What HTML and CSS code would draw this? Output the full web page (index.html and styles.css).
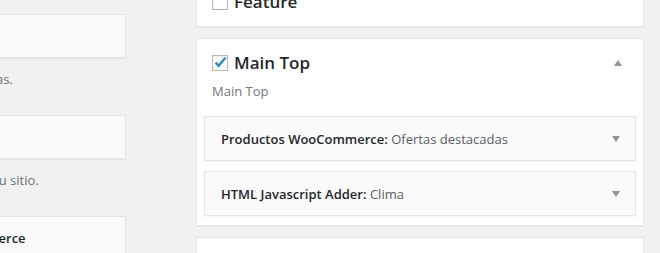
FILE: index.html
```html
<!DOCTYPE html>
<html lang="es">
<head>
    <meta charset="UTF-8">
    <meta name="viewport" content="width=device-width, initial-scale=1.0">
    <title>Widgets</title>
    <link rel="stylesheet" href="styles.css">
</head>
<body>
    <div class="page">
        <div class="available">
            <div class="widget">
                <div class="widget-top"><h3>Categorías</h3></div>
                <p class="widget-desc">Una lista o desplegable de categorías.</p>
            </div>
            <div class="widget">
                <div class="widget-top"><h3>Calendario</h3></div>
                <p class="widget-desc">Un calendario con las entradas de tu sitio.</p>
            </div>
            <div class="widget">
                <div class="widget-top"><h3>Productos recientes WooCommerce</h3></div>
            </div>
        </div>

        <div class="sidebars">
            <div class="sidebar">
                <div class="sidebar-name">
                    <span class="check"></span>
                    <h2>Feature</h2>
                </div>
            </div>

            <div class="sidebar">
                <div class="sidebar-name">
                    <span class="check checked">
                        <svg width="16" height="16" viewBox="0 0 16 16"><path d="M3.6 7.6 L6.6 10.8 L13.4 2.8" fill="none" stroke="#1e8cbe" stroke-width="2.4"/></svg>
                    </span>
                    <h2>Main Top</h2>
                    <span class="arrow-up"></span>
                </div>
                <p class="sidebar-description">Main Top</p>
                <div class="widget-list">
                    <div class="sidebar-widget">
                        <h3>Productos WooCommerce:<span class="in-title"> Ofertas destacadas</span></h3>
                        <span class="arrow-down"></span>
                    </div>
                    <div class="sidebar-widget">
                        <h3>HTML Javascript Adder:<span class="in-title"> Clima</span></h3>
                        <span class="arrow-down"></span>
                    </div>
                </div>
            </div>

            <div class="sidebar empty"></div>
        </div>
    </div>
</body>
</html>
```

FILE: styles.css
```css
body {
    margin: 0;
    overflow: hidden;
    background-color: #f1f1f1;
    font-family: "Open Sans", "DejaVu Sans", sans-serif;
    color: #23282d;
}
.page {
    display: flex;
    gap: 70px;
    margin-left: -215px;
}
h2, h3, p {
    margin: 0;
}
h3 {
    font-size: 13px;
    font-weight: 600;
    line-height: 18px;
    color: #23282d;
    white-space: nowrap;
}

/* widgets disponibles */
.available {
    width: 341px;
    flex-shrink: 0;
    padding-top: 14px;
}
.widget-top {
    display: flex;
    align-items: center;
    height: 42px;
    padding: 0 15px;
    border: 1px solid #e5e5e5;
    background-color: #fafafa;
    box-shadow: 0 1px 1px rgba(0, 0, 0, 0.04);
}
.widget-desc {
    margin: 12px 0 27px;
    font-size: 13px;
    line-height: 18px;
    color: #6c7278;
    white-space: nowrap;
}

/* areas de widgets */
.sidebars {
    width: 448px;
    flex-shrink: 0;
    margin-top: -23px;
}
.sidebar {
    margin-bottom: 11px;
    border: 1px solid #e5e5e5;
    background-color: #fff;
    box-shadow: 0 1px 1px rgba(0, 0, 0, 0.04);
}
.sidebar.empty {
    height: 60px;
}
.sidebar-name {
    display: flex;
    align-items: center;
    height: 48px;
    padding: 0 21px 0 15px;
}
.sidebar-name h2 {
    flex: 1;
    margin-left: 6px;
    font-size: 17px;
    font-weight: 600;
    line-height: 22px;
    color: #23282d;
}
.check {
    width: 14px;
    height: 14px;
    border: 1px solid #b4b9be;
    background-color: #fff;
    box-shadow: inset 0 1px 2px rgba(0, 0, 0, 0.1);
    position: relative;
}
.check svg {
    position: absolute;
    left: -1px;
    top: -1px;
}
.arrow-up {
    width: 0;
    height: 0;
    border-left: 4.5px solid transparent;
    border-right: 4.5px solid transparent;
    border-bottom: 6px solid #8f959a;
}
.arrow-down {
    width: 0;
    height: 0;
    border-left: 4.5px solid transparent;
    border-right: 4.5px solid transparent;
    border-top: 6px solid #8f959a;
}
.sidebar-description {
    margin-top: -5px;
    padding: 0 15px;
    font-size: 13px;
    line-height: 18px;
    color: #72777c;
}
.widget-list {
    display: flex;
    flex-direction: column;
    gap: 10px;
    padding: 16px 7px 9px;
}
.sidebar-widget {
    display: flex;
    align-items: center;
    justify-content: space-between;
    height: 43px;
    padding: 0 15px 0 16px;
    border: 1px solid #e5e5e5;
    background-color: #fafafa;
    box-shadow: 0 1px 1px rgba(0, 0, 0, 0.04);
}
.in-title {
    font-weight: 400;
    color: #585f67;
}
```
